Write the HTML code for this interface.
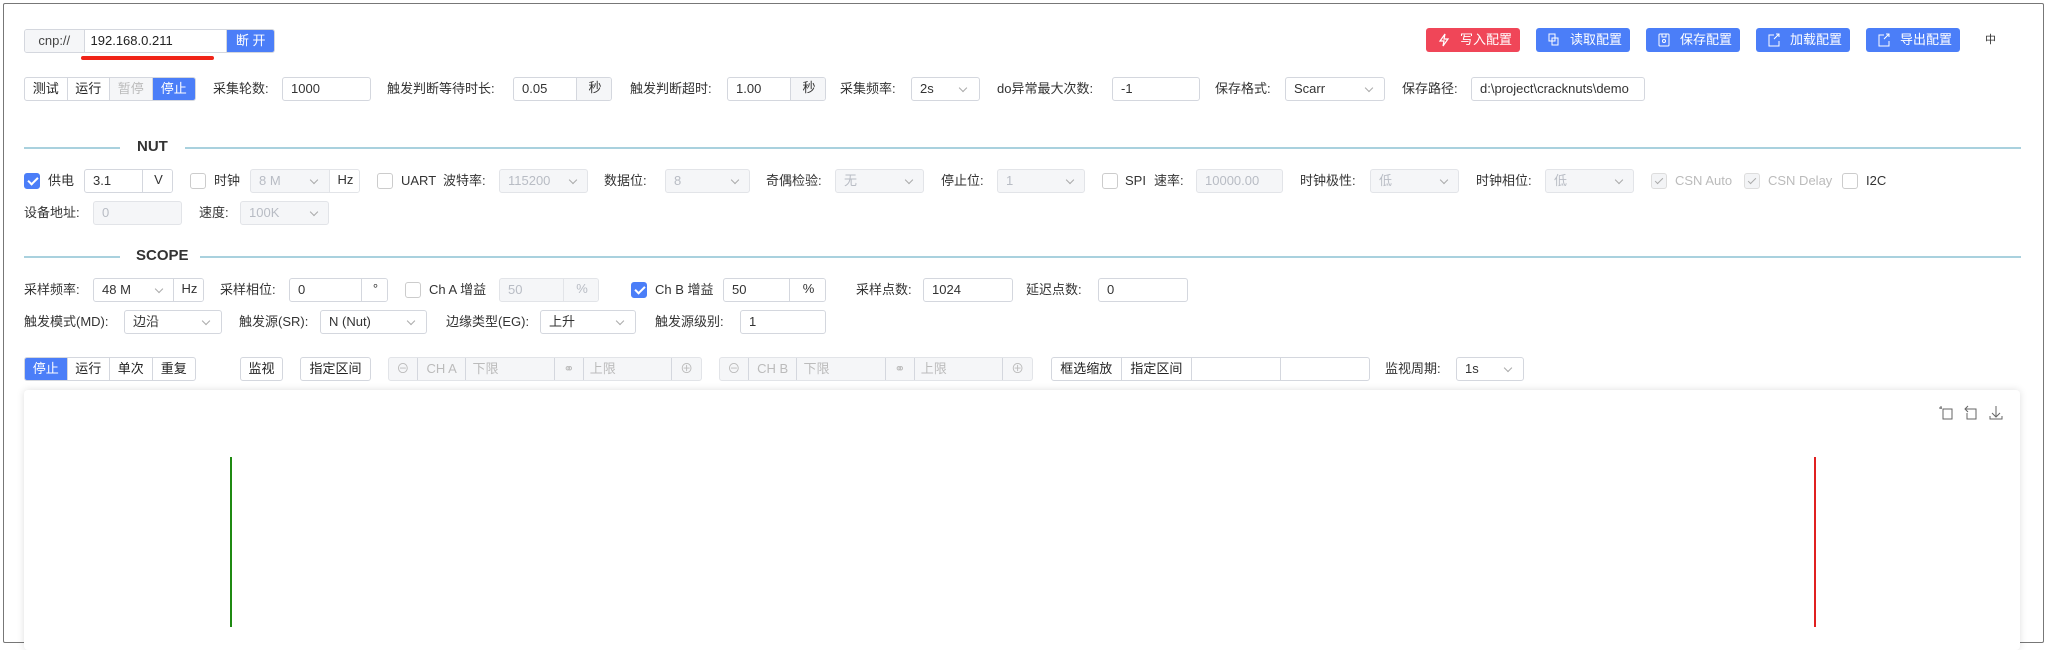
<!DOCTYPE html>
<html><head><meta charset="utf-8"><style>
*{box-sizing:border-box;margin:0;padding:0}
body{width:2050px;height:617px;overflow:hidden;background:#fff;position:relative;font-family:"Liberation Sans","Noto Sans CJK SC",sans-serif;font-size:13px;color:#222}
.a{position:absolute}
.frame{left:3px;top:3px;width:2041px;height:640px;border:1.5px solid #777;border-radius:2px}
.lb{position:absolute;line-height:24px;height:24px;white-space:nowrap;color:#333}
.bx{position:absolute;height:24px;border:1px solid #d4d7de;border-radius:3px;background:#fff;line-height:22px;padding-left:8px;white-space:nowrap;overflow:hidden;color:#333}
.dis{background:#f5f6f8;color:#b8bcc4;border-color:#e2e4e8}
.sep{position:absolute;top:-1px;bottom:-1px;border-left:1px solid #d4d7de;text-align:center;padding:0;background:#fff}
.dis .sep{background:#f5f6f8;border-color:#e2e4e8}
.chev{position:absolute;top:7px;width:6px;height:6px;border-right:1px solid #aaa;border-bottom:1px solid #aaa;transform:rotate(45deg)}
.btn{position:absolute;top:28px;height:24px;border-radius:3px;color:#fff;line-height:24px;font-size:13px;padding-left:34px;background:#4b7ef8}
.btn svg{position:absolute;left:12px;top:5px}
.cb{position:absolute;width:16px;height:16px;border:1px solid #ccc;border-radius:3px;background:#fff}
.cb.on{background:#4b7ef8;border-color:#4b7ef8}
.cb.on::after{content:"";position:absolute;left:4.5px;top:1px;width:4px;height:8px;border-right:2px solid #fff;border-bottom:2px solid #fff;transform:rotate(45deg)}
.cb.dc{background:#f3f4f6;border-color:#ddd}
.cb.dc::after{content:"";position:absolute;left:5px;top:2px;width:3px;height:7px;border-right:1px solid #aaa;border-bottom:1px solid #aaa;transform:rotate(45deg)}
.hl{position:absolute;height:2px;background:#a9d1de}
.sec{position:absolute;font-size:15px;font-weight:bold;color:#333}
.grp{position:absolute;height:24px;border:1px solid #d4d7de;border-radius:3px;overflow:hidden;display:flex;background:#fff}
.grp span{display:block;text-align:center;line-height:22px;border-right:1px solid #d4d7de;height:22px}
.grp span:last-child{border-right:none}
.sel{background:#4b7ef8;color:#fff}
</style></head><body>
<div class="a frame"></div>

<!-- row 1 -->
<div class="grp" style="left:24px;top:29px;width:251px;">
<span style="width:60px;background:#f5f6f8;color:#444">cnp://</span>
<span style="width:144px;text-align:left;padding-left:6px">192.168.0.211</span>
<span style="width:47px;background:#4b7ef8;color:#fff">断 开</span></div>
<div class="a" style="left:81px;top:56px;width:133px;height:4px;background:#f02418;border-radius:2px"></div>

<div class="btn" style="left:1426px;width:94px;background:#f04658"><svg width="12" height="14" viewBox="0 0 12 14"><path d="M7 1L2 8h4l-1 5 5-7H6z" fill="none" stroke="#fff" stroke-width="1.2"/></svg>写入配置</div>
<div class="btn" style="left:1536px;width:94px"><svg width="12" height="14" viewBox="0 0 12 14"><rect x="1" y="1" width="6" height="7" fill="none" stroke="#fff"/><rect x="4" y="5" width="6" height="7" fill="none" stroke="#fff"/></svg>读取配置</div>
<div class="btn" style="left:1646px;width:94px"><svg width="12" height="14" viewBox="0 0 12 14"><rect x="1" y="1" width="10" height="12" rx="1" fill="none" stroke="#fff"/><circle cx="6" cy="8" r="1.5" fill="none" stroke="#fff"/><path d="M4 1v3h4V1" fill="none" stroke="#fff"/></svg>保存配置</div>
<div class="btn" style="left:1756px;width:94px"><svg width="12" height="14" viewBox="0 0 12 14"><path d="M6 2H1v11h10V8M8 1l3 0 0 3M11 1L6 6" fill="none" stroke="#fff"/></svg>加载配置</div>
<div class="btn" style="left:1866px;width:94px"><svg width="12" height="14" viewBox="0 0 12 14"><path d="M6 2H1v11h10V8M8 1l3 0 0 3M11 1L6 6" fill="none" stroke="#fff"/></svg>导出配置</div>
<div class="lb" style="left:1985px;top:28px;font-size:11px">中</div>

<!-- row 2 -->
<div class="grp" style="left:24px;top:77px;width:172px">
<span style="width:43px">测试</span><span style="width:43px">运行</span><span style="width:43px;background:#f5f6f8;color:#bbb">暂停</span><span style="width:43px" class="sel">停止</span></div>
<div class="lb" style="left:213px;top:77px">采集轮数:</div>
<div class="bx" style="left:282px;top:77px;width:89px">1000</div>
<div class="lb" style="left:387px;top:77px">触发判断等待时长:</div>
<div class="bx" style="left:513px;top:77px;width:99px">0.05<div class="sep" style="left:62px;width:37px;background:#f5f6f8">秒</div></div>
<div class="lb" style="left:630px;top:77px">触发判断超时:</div>
<div class="bx" style="left:727px;top:77px;width:99px">1.00<div class="sep" style="left:62px;width:37px;background:#f5f6f8">秒</div></div>
<div class="lb" style="left:840px;top:77px">采集频率:</div>
<div class="bx" style="left:911px;top:77px;width:69px">2s<div class="chev" style="left:48px"></div></div>
<div class="lb" style="left:997px;top:77px">do异常最大次数:</div>
<div class="bx" style="left:1112px;top:77px;width:88px">-1</div>
<div class="lb" style="left:1215px;top:77px">保存格式:</div>
<div class="bx" style="left:1285px;top:77px;width:100px">Scarr<div class="chev" style="left:80px"></div></div>
<div class="lb" style="left:1402px;top:77px">保存路径:</div>
<div class="bx" style="left:1471px;top:77px;width:174px">d:\project\cracknuts\demo</div>

<!-- NUT -->
<div class="hl" style="left:24px;top:147px;width:96px"></div>
<div class="sec" style="left:137px;top:138px">NUT</div>
<div class="hl" style="left:185px;top:147px;width:1836px"></div>

<div class="cb on" style="left:24px;top:173px"></div>
<div class="lb" style="left:48px;top:169px">供电</div>
<div class="bx" style="left:84px;top:169px;width:89px">3.1<div class="sep" style="left:57px;width:32px">V</div></div>
<div class="cb" style="left:190px;top:173px"></div>
<div class="lb" style="left:214px;top:169px">时钟</div>
<div class="bx dis" style="left:250px;top:169px;width:110px">8 M<div class="chev" style="left:60px"></div><div class="sep" style="left:78px;width:32px;background:#fff;color:#333">Hz</div></div>
<div class="cb" style="left:377px;top:173px"></div>
<div class="lb" style="left:401px;top:169px">UART</div>
<div class="lb" style="left:443px;top:169px">波特率:</div>
<div class="bx dis" style="left:499px;top:169px;width:89px">115200<div class="chev" style="left:70px"></div></div>
<div class="lb" style="left:604px;top:169px">数据位:</div>
<div class="bx dis" style="left:665px;top:169px;width:85px">8<div class="chev" style="left:66px"></div></div>
<div class="lb" style="left:766px;top:169px">奇偶检验:</div>
<div class="bx dis" style="left:835px;top:169px;width:89px">无<div class="chev" style="left:70px"></div></div>
<div class="lb" style="left:941px;top:169px">停止位:</div>
<div class="bx dis" style="left:997px;top:169px;width:88px">1<div class="chev" style="left:69px"></div></div>
<div class="cb" style="left:1102px;top:173px"></div>
<div class="lb" style="left:1125px;top:169px">SPI</div>
<div class="lb" style="left:1154px;top:169px">速率:</div>
<div class="bx dis" style="left:1196px;top:169px;width:87px">10000.00</div>
<div class="lb" style="left:1300px;top:169px">时钟极性:</div>
<div class="bx dis" style="left:1370px;top:169px;width:89px">低<div class="chev" style="left:70px"></div></div>
<div class="lb" style="left:1476px;top:169px">时钟相位:</div>
<div class="bx dis" style="left:1545px;top:169px;width:89px">低<div class="chev" style="left:70px"></div></div>
<div class="cb dc" style="left:1651px;top:173px"></div>
<div class="lb" style="left:1675px;top:169px;color:#bbb">CSN Auto</div>
<div class="cb dc" style="left:1744px;top:173px"></div>
<div class="lb" style="left:1768px;top:169px;color:#bbb">CSN Delay</div>
<div class="cb" style="left:1842px;top:173px"></div>
<div class="lb" style="left:1866px;top:169px">I2C</div>

<div class="lb" style="left:24px;top:201px">设备地址:</div>
<div class="bx dis" style="left:93px;top:201px;width:89px">0</div>
<div class="lb" style="left:199px;top:201px">速度:</div>
<div class="bx dis" style="left:240px;top:201px;width:89px">100K<div class="chev" style="left:70px"></div></div>

<!-- SCOPE -->
<div class="hl" style="left:24px;top:256px;width:96px"></div>
<div class="sec" style="left:136px;top:247px">SCOPE</div>
<div class="hl" style="left:200px;top:256px;width:1821px"></div>

<div class="lb" style="left:24px;top:278px">采样频率:</div>
<div class="bx" style="left:93px;top:278px;width:111px">48 M<div class="chev" style="left:62px"></div><div class="sep" style="left:79px;width:32px">Hz</div></div>
<div class="lb" style="left:220px;top:278px">采样相位:</div>
<div class="bx" style="left:289px;top:278px;width:99px">0<div class="sep" style="left:71px;width:28px">°</div></div>
<div class="cb" style="left:405px;top:282px"></div>
<div class="lb" style="left:429px;top:278px">Ch A 增益</div>
<div class="bx dis" style="left:499px;top:278px;width:100px">50<div class="sep" style="left:63px;width:37px">%</div></div>
<div class="cb on" style="left:631px;top:282px"></div>
<div class="lb" style="left:655px;top:278px">Ch B 增益</div>
<div class="bx" style="left:723px;top:278px;width:103px">50<div class="sep" style="left:65px;width:38px">%</div></div>
<div class="lb" style="left:856px;top:278px">采样点数:</div>
<div class="bx" style="left:923px;top:278px;width:90px">1024</div>
<div class="lb" style="left:1026px;top:278px">延迟点数:</div>
<div class="bx" style="left:1098px;top:278px;width:90px">0</div>

<div class="lb" style="left:24px;top:310px">触发模式(MD):</div>
<div class="bx" style="left:124px;top:310px;width:98px">边沿<div class="chev" style="left:78px"></div></div>
<div class="lb" style="left:239px;top:310px">触发源(SR):</div>
<div class="bx" style="left:320px;top:310px;width:107px">N (Nut)<div class="chev" style="left:87px"></div></div>
<div class="lb" style="left:446px;top:310px">边缘类型(EG):</div>
<div class="bx" style="left:540px;top:310px;width:96px">上升<div class="chev" style="left:76px"></div></div>
<div class="lb" style="left:655px;top:310px">触发源级别:</div>
<div class="bx" style="left:740px;top:310px;width:86px">1</div>

<!-- control row -->
<div class="grp" style="left:24px;top:357px;width:172px">
<span style="width:43px" class="sel">停止</span><span style="width:43px">运行</span><span style="width:43px">单次</span><span style="width:43px">重复</span></div>
<div class="grp" style="left:240px;top:357px;width:43px"><span style="width:41px">监视</span></div>
<div class="grp" style="left:300px;top:357px;width:71px"><span style="width:69px">指定区间</span></div>
<div class="grp" style="left:388px;top:357px;width:314px;background:#f5f6f8;color:#bbb;border-color:#e2e4e8">
<span style="width:29px">⊖</span><span style="width:49px">CH A</span><span style="width:89px;text-align:left;padding-left:6px">下限</span><span style="width:29px">⚭</span><span style="width:89px;text-align:left;padding-left:6px">上限</span><span style="width:29px">⊕</span></div>
<div class="grp" style="left:719px;top:357px;width:314px;background:#f5f6f8;color:#bbb;border-color:#e2e4e8">
<span style="width:29px">⊖</span><span style="width:49px">CH B</span><span style="width:89px;text-align:left;padding-left:6px">下限</span><span style="width:29px">⚭</span><span style="width:89px;text-align:left;padding-left:6px">上限</span><span style="width:29px">⊕</span></div>
<div class="grp" style="left:1051px;top:357px;width:319px">
<span style="width:70px">框选缩放</span><span style="width:71px">指定区间</span><span style="width:89px"></span><span style="width:89px"></span></div>
<div class="lb" style="left:1385px;top:357px">监视周期:</div>
<div class="bx" style="left:1456px;top:357px;width:68px">1s<div class="chev" style="left:48px"></div></div>

<!-- chart -->
<div class="a" style="left:24px;top:390px;width:1996px;height:260px;border-radius:4px;box-shadow:0 0 8px rgba(0,0,0,0.13);background:#fff"></div>
<div class="a" style="left:230px;top:457px;width:1.5px;height:170px;background:#1f8a12"></div>
<div class="a" style="left:1814px;top:457px;width:1.5px;height:170px;background:#e02020"></div>
<svg class="a" style="left:1938px;top:404px" width="80" height="20" viewBox="0 0 80 20">
<g fill="none" stroke="#666" stroke-width="1">
<path d="M3 2v3M1 4h3M5 5h9v10H5z"/>
<path d="M30 2l-3 3 3 3M27 5h11v10H29V9"/>
<path d="M58 2v11M54 9l4 4 4-4M52 12v3h12v-3"/>
</g></svg>
</body></html>
